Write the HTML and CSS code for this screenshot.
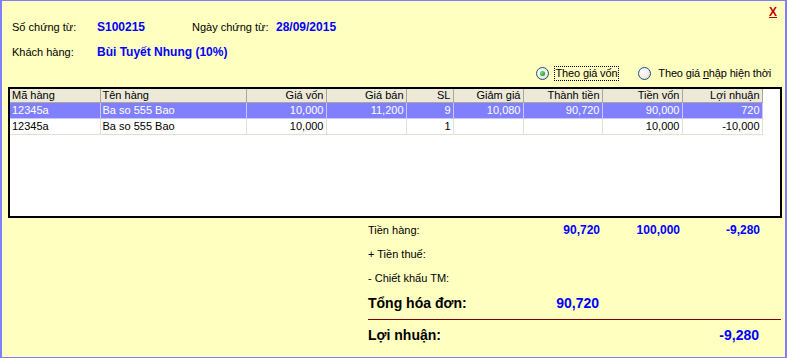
FILE: index.html
```html
<!DOCTYPE html>
<html lang="vi">
<head>
  <meta charset="UTF-8" />
  <meta name="viewport" content="width=device-width, initial-scale=1.0"/>
  <title>Chi tiết hóa đơn</title>
  <link rel="stylesheet" href="styles.css">
</head>
<body>

  <div class="window">
    <a class="close">X</a>

    <div class="info">
      <span class="label">Số chứng từ:</span>
      <span class="value">S100215</span>
      <span class="label">Ngày chứng từ:</span>
      <span class="value">28/09/2015</span>
      <span class="label">Khách hàng:</span>
      <span class="value span3">Bùi Tuyết Nhung (10%)</span>
    </div>

    <div class="options">
      <label class="radio checked"><span class="dot"></span><span class="text focus">Theo giá vốn</span></label>
      <label class="radio"><span class="dot"></span><span class="text">Theo giá <u>n</u>hập hiện thời</span></label>
    </div>

    <div class="grid">
      <table>
        <colgroup>
          <col style="width:90px"><col style="width:146px"><col style="width:80px">
          <col style="width:80px"><col style="width:47px"><col style="width:70px">
          <col style="width:79px"><col style="width:80px"><col style="width:80px">
        </colgroup>
        <thead>
          <tr>
            <th class="left">Mã hàng</th>
            <th class="left">Tên hàng</th>
            <th>Giá vốn</th>
            <th>Giá bán</th>
            <th>SL</th>
            <th>Giảm giá</th>
            <th>Thành tiền</th>
            <th>Tiền vốn</th>
            <th>Lợi nhuận</th>
          </tr>
        </thead>
        <tbody>
          <tr class="selected">
            <td class="left">12345a</td>
            <td class="left">Ba so 555 Bao</td>
            <td>10,000</td>
            <td>11,200</td>
            <td>9</td>
            <td>10,080</td>
            <td>90,720</td>
            <td>90,000</td>
            <td>720</td>
          </tr>
          <tr>
            <td class="left">12345a</td>
            <td class="left">Ba so 555 Bao</td>
            <td>10,000</td>
            <td></td>
            <td>1</td>
            <td></td>
            <td></td>
            <td>10,000</td>
            <td>-10,000</td>
          </tr>
        </tbody>
      </table>
    </div>

    <div class="summary">
      <div class="row">
        <span class="label">Tiền hàng:</span>
        <span class="num">90,720</span>
        <span class="num">100,000</span>
        <span class="num">-9,280</span>
      </div>
      <div class="row">
        <span class="label">+ Tiền thuế:</span>
      </div>
      <div class="row">
        <span class="label">- Chiết khấu TM:</span>
      </div>
      <div class="row big">
        <span class="label">Tổng hóa đơn:</span>
        <span class="num">90,720</span>
      </div>
      <div class="divider"></div>
      <div class="row big profit">
        <span class="label">Lợi nhuận:</span>
        <span class="num"></span>
        <span class="num"></span>
        <span class="num">-9,280</span>
      </div>
    </div>
  </div>

</body>
</html>
```

FILE: styles.css
```css
body {
  margin: 0;
  font-family: 'Liberation Sans', Arial, sans-serif;
  font-size: 11px;
  color: #000;
}

.window {
  position: relative;
  width: 787px;
  height: 358px;
  box-sizing: border-box;
  background: #ffffc0;
  border: 1px solid #8080ff;
  border-left-width: 2px;
  border-right-width: 2px;
}

.close {
  position: absolute;
  top: 4px;
  right: 8px;
  color: #c00000;
  font-weight: bold;
  font-size: 12px;
  text-decoration: underline;
  cursor: pointer;
}

.info {
  display: grid;
  grid-template-columns: 85px 95px 84px auto;
  grid-auto-rows: 25px;
  align-items: center;
  padding: 13px 0 0 10px;
}

.info .value {
  color: #0000ff;
  font-weight: bold;
  font-size: 12px;
}

.info .span3 {
  grid-column: span 3;
}

.options {
  display: flex;
  justify-content: flex-end;
  align-items: center;
  height: 18px;
  padding-right: 12px;
  gap: 19px;
}

.radio {
  display: flex;
  align-items: center;
  gap: 5px;
}

.radio .dot {
  width: 11px;
  height: 11px;
  border-radius: 50%;
  border: 1px solid #1c5180;
  background: radial-gradient(circle at 35% 35%, #ffffff 0%, #f1efe6 55%, #cfcdc2 100%);
  display: flex;
  align-items: center;
  justify-content: center;
}

.radio.checked .dot::after {
  content: "";
  width: 5px;
  height: 5px;
  border-radius: 50%;
  background: radial-gradient(circle at 35% 35%, #7fe07f 0%, #21a121 70%);
}

.radio .text {
  padding: 0 1px;
  border: 1px solid transparent;
  line-height: 13px;
  letter-spacing: -0.15px;
}

.radio .text.focus {
  border: 1px dotted #000;
}

.grid {
  margin: 5px 3px 0 6px;
  height: 127px;
  border: 2px solid #000;
  background: #fff;
}

table {
  table-layout: fixed;
  border-collapse: collapse;
  width: 752px;
}

th, td {
  padding: 0 2px;
  text-align: right;
  white-space: nowrap;
  overflow: hidden;
  font-weight: normal;
}

th {
  height: 13px;
  line-height: 13px;
  background: #ece9d8;
  border-right: 1px solid #aca899;
  border-bottom: 1px solid #aca899;
}

td {
  height: 15px;
  line-height: 15px;
  border-right: 1px solid #e3e0d2;
  border-bottom: 1px solid #e3e0d2;
}

.left {
  text-align: left;
}

tr.selected td {
  background: #8080ff;
  color: #fff;
  border-right-color: #c8c8ff;
  border-bottom-color: #c8c8ff;
}

.summary {
  margin: 0 4px 0 366px;
}

.summary .row {
  display: grid;
  grid-template-columns: 152px 80px 80px 80px;
  align-items: center;
  height: 24px;
}

.summary .num {
  text-align: right;
  color: #0000ff;
  font-weight: bold;
  font-size: 12px;
}

.summary .big {
  height: 26px;
}

.summary .big .label,
.summary .big .num {
  font-weight: bold;
  font-size: 14px;
}

.summary .big .num {
  padding-right: 1px;
}

.divider {
  margin-top: 3px;
  height: 1px;
  background: #800000;
}

.summary .profit {
  margin-top: 2px;
  height: 26px;
}
```
